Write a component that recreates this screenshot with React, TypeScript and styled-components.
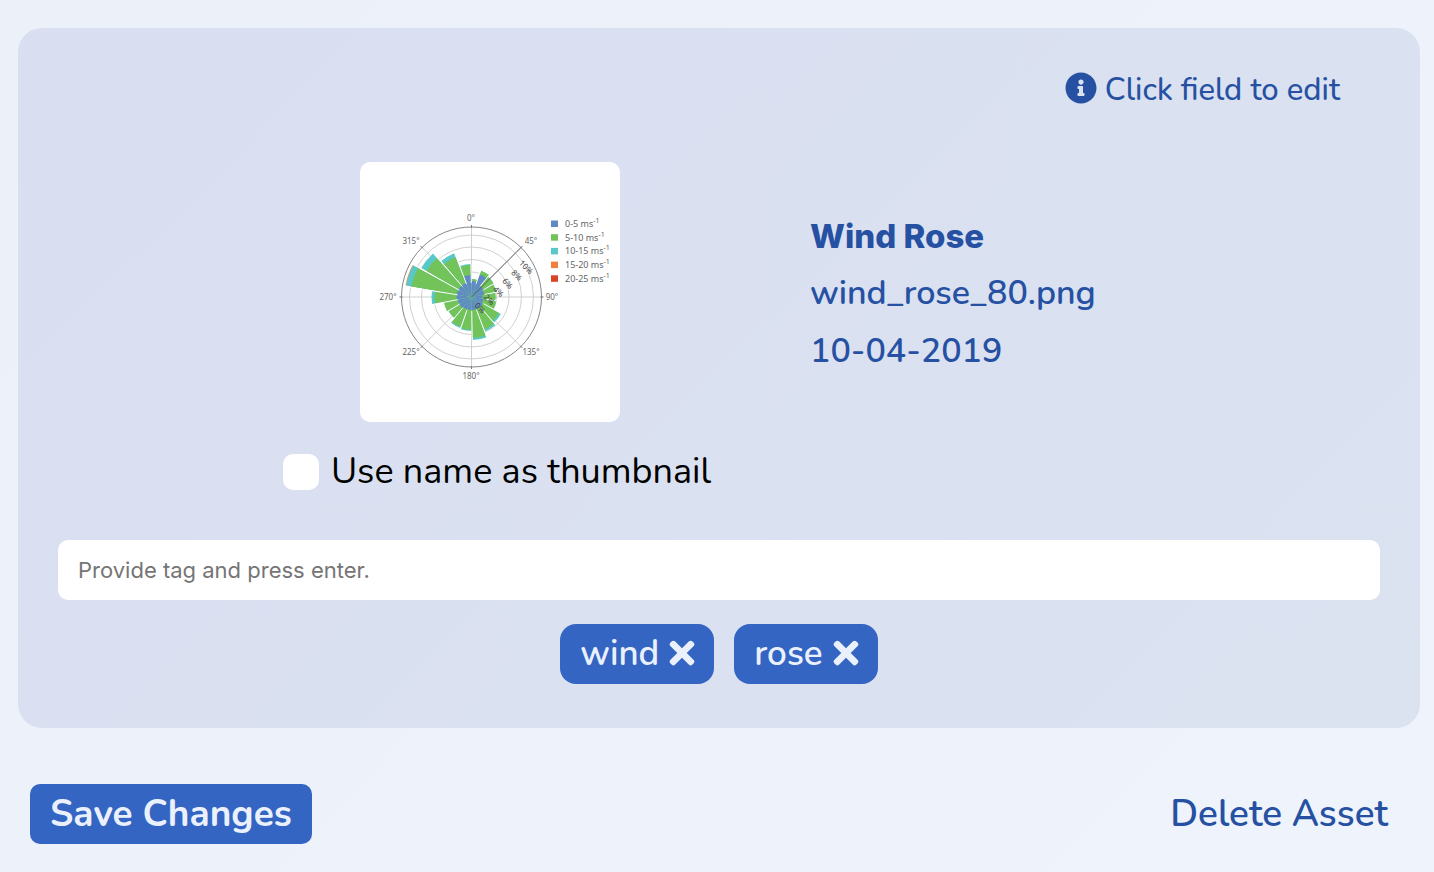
import React from "react";
import styled, { createGlobalStyle } from "styled-components";
import { FaInfoCircle, FaTimes } from "react-icons/fa";

const sans = `Nunito, "Noto Sans", sans-serif`;
const ui = `Inter, "Liberation Sans", sans-serif`;
const blue = "#2651a3";

const GlobalStyle = createGlobalStyle`
  * { box-sizing: border-box; }
  html { min-height: 100%; background: linear-gradient(135deg, #ebf0f9, #eff4fc); }
  body { margin: 0; font-family: ${sans}; color: ${blue}; }
  button, input { font: inherit; color: inherit; border: 0; margin: 0; }
  button { cursor: pointer; }
`;

const Page = styled.main`
  padding: 28px 14px 28px 18px;
`;

const Card = styled.section`
  border-radius: 24px;
  background: linear-gradient(135deg, #d9dff1, #dbe2f0);
  padding: 40px 40px 44px;
`;

const Hint = styled.p`
  display: flex;
  justify-content: flex-end;
  align-items: center;
  gap: 8px;
  margin: 0 40px 50px 0;
  font-size: 31px;
  font-weight: 500;
  line-height: 44px;
  svg { width: 32px; height: 32px; margin-bottom: 4px; }
`;

const Details = styled.div`
  display: grid;
  grid-template-columns: minmax(0, 720fr) minmax(0, 602fr);
`;

const Preview = styled.div`
  display: flex;
  flex-direction: column;
  align-items: center;
  padding-left: 144px;
`;

const Thumb = styled.svg`
  display: block;
  width: 260px;
  height: 260px;
  border-radius: 10px;
  background: #fff;
`;

const Check = styled.label`
  display: flex;
  align-items: center;
  gap: 12px;
  margin: 26px 0 0 14px;
  color: #000;
  font-size: 36px;
  line-height: 48px;
  white-space: nowrap;
`;

const CheckBox = styled.input`
  appearance: none;
  width: 36px;
  height: 36px;
  border-radius: 10px;
  background: #fff;
  &:checked { background: ${blue}; }
`;

const Fields = styled.div`
  display: flex;
  flex-direction: column;
  align-items: flex-start;
  padding: 46px 0 0 32px;
`;

const Field = styled.button<{ $title?: boolean }>`
  padding: 0;
  background: none;
  font-family: ${({ $title }) => ($title ? ui : sans)};
  font-weight: ${({ $title }) => ($title ? 800 : 600)};
  font-size: ${({ $title }) => ($title ? "33px" : "34px")};
  line-height: ${({ $title }) => ($title ? "56px" : "58px")};
`;

const TagInput = styled.input`
  display: block;
  width: 100%;
  height: 60px;
  margin-top: 44px;
  padding: 0 20px;
  border-radius: 10px;
  background: #fff;
  font-family: ${ui};
  font-size: 22px;
  &::placeholder { color: #757575; opacity: 1; }
`;

const Tags = styled.ul`
  display: flex;
  justify-content: center;
  gap: 20px;
  margin: 24px 0 0;
  padding: 0;
  list-style: none;
`;

const Tag = styled.li`
  display: flex;
  align-items: center;
  gap: 9px;
  height: 60px;
  padding: 0 18px 2px 20px;
  border-radius: 16px;
  background: #3465c3;
  color: #ebf1fc;
  font-size: 35px;
  font-weight: 600;
`;

const Remove = styled.button`
  display: flex;
  padding: 0;
  background: none;
  svg { width: 28px; height: 36px; }
`;

const Actions = styled.footer`
  display: flex;
  justify-content: space-between;
  align-items: center;
  padding: 56px 32px 0 12px;
`;

const Action = styled.button<{ $primary?: boolean }>`
  height: 60px;
  padding: 0 ${({ $primary }) => ($primary ? "20px" : "0")};
  border-radius: 10px;
  background: ${({ $primary }) => ($primary ? "#3465c3" : "none")};
  color: ${({ $primary }) => ($primary ? "#ebf1fc" : blue)};
  font-size: 37px;
  font-weight: ${({ $primary }) => ($primary ? 700 : 600)};
  line-height: 60px;
`;

const CX = 111.5;
const CY = 135;
const BLUE = "#5f8ac7";
const GREEN = "#72c35a";
const CYAN = "#58c8c8";

// Outer radius of each speed band, one entry for every 20 degree sector.
const sectors: [number, number, number][] = [
  [16, 18, 18], [24, 28, 28], [14, 26, 26], [13, 25, 25], [11, 24, 24], [12, 25, 25],
  [13, 32, 34], [13, 35, 37], [13, 41, 43], [13, 33, 34], [13, 32, 33], [14, 27, 27],
  [14, 28, 28], [15, 37, 40], [15, 61, 67], [15, 52, 58], [15, 43, 47], [22, 32, 33],
];

const legend: [string, string][] = [
  ["0-5", BLUE], ["5-10", GREEN], ["10-15", CYAN], ["15-20", "#f0813c"], ["20-25", "#d94426"],
];

const bearings: [string, number, number][] = [
  ["0°", 111, 59], ["45°", 171, 82], ["90°", 192, 138], ["135°", 171, 193],
  ["180°", 111, 217], ["225°", 51, 193], ["270°", 28, 138], ["315°", 51, 82],
];

const point = (r: number, deg: number) => {
  const a = (deg * Math.PI) / 180;
  return `${(CX + r * Math.sin(a)).toFixed(2)} ${(CY - r * Math.cos(a)).toFixed(2)}`;
};

const wedge = (r: number, i: number) =>
  `M${CX} ${CY}L${point(r, i * 20)}A${r} ${r} 0 0 1 ${point(r, i * 20 + 18.5)}Z`;

function WindRose() {
  return (
    <Thumb viewBox="0 0 260 260" role="img" aria-label="Wind rose chart">
      <g fill="none" stroke="#c4c4c4" strokeWidth="0.8">
        {[12.5, 25, 37.5, 50, 62].map((r) => <circle key={r} cx={CX} cy={CY} r={r} />)}
        {[0, 45, 90, 135, 180, 225, 270, 315].map((d) => (
          <path key={d} d={`M${CX} ${CY}L${point(72, d)}`} />
        ))}
      </g>
      <circle cx={CX} cy={CY} r="12" fill="#8eaeda" />
      {sectors.map(([b, g, c], i) => (
        <g key={i}>
          <path d={wedge(c, i)} fill={i === 14 ? "#e59b5c" : CYAN} />
          {i === 14 && <path d={wedge(66.3, i)} fill={CYAN} />}
          <path d={wedge(g, i)} fill={GREEN} />
          <path d={wedge(b, i)} fill={BLUE} />
        </g>
      ))}
      {sectors.map(([, , c], i) => (
        <path
          key={i}
          d={`M${point(14, i * 20 - 1)}L${point(Math.max(c, sectors[(i + 17) % 18][2]), i * 20 - 1)}`}
          stroke="#fff"
          strokeWidth="0.9"
        />
      ))}
      <g fill="none" stroke="#777" strokeWidth="0.9">
        <circle cx={CX} cy={CY} r={70} />
        <path d={`M${CX} ${CY}L${point(70, 45)}`} stroke="#555" />
        {[0, 45, 90, 135, 180, 225, 270, 315].map((d) => (
          <path key={d} d={`M${point(69, d)}L${point(72, d)}`} />
        ))}
      </g>
      <g fontFamily="Noto Sans, sans-serif" fontSize="8" fill="#666" textAnchor="middle">
        {bearings.map(([t, x, y]) => <text key={t} x={x} y={y}>{t}</text>)}
        {[0, 2, 4, 6, 8, 10].map((n) => (
          <text key={n} transform={`translate(${118 + n * 4.6} ${148 - n * 4.1}) rotate(45)`} fill="#444">
            {n}%
          </text>
        ))}
      </g>
      <g fontFamily="Noto Sans, sans-serif" fontSize="9" fill="#666">
        {legend.map(([t, c], i) => (
          <g key={t}>
            <rect x="191" y={58.5 + i * 13.7} width="7" height="6.5" fill={c} />
            <text x="205" y={65 + i * 13.7}>
              {t} ms<tspan dy="-4" fontSize="7">-1</tspan>
            </text>
          </g>
        ))}
      </g>
    </Thumb>
  );
}

export default function App() {
  const [tags, setTags] = React.useState(["wind", "rose"]);
  const [draft, setDraft] = React.useState("");

  const addTag = (e: React.KeyboardEvent) => {
    if (e.key === "Enter" && draft.trim()) {
      setTags([...tags, draft.trim()]);
      setDraft("");
    }
  };

  return (
    <>
      <GlobalStyle />
      <Page>
        <Card>
          <Hint><FaInfoCircle />Click field to edit</Hint>
          <Details>
            <Preview>
              <WindRose />
              <Check><CheckBox type="checkbox" />Use name as thumbnail</Check>
            </Preview>
            <Fields>
              <Field $title>Wind Rose</Field>
              <Field>wind_rose_80.png</Field>
              <Field>10-04-2019</Field>
            </Fields>
          </Details>
          <TagInput
            aria-label="Tag"
            placeholder="Provide tag and press enter."
            value={draft}
            onChange={(e) => setDraft(e.target.value)}
            onKeyDown={addTag}
          />
          <Tags>
            {tags.map((t) => (
              <Tag key={t}>
                {t}
                <Remove aria-label={`Remove ${t}`} onClick={() => setTags(tags.filter((x) => x !== t))}>
                  <FaTimes />
                </Remove>
              </Tag>
            ))}
          </Tags>
        </Card>
        <Actions>
          <Action $primary>Save Changes</Action>
          <Action>Delete Asset</Action>
        </Actions>
      </Page>
    </>
  );
}
